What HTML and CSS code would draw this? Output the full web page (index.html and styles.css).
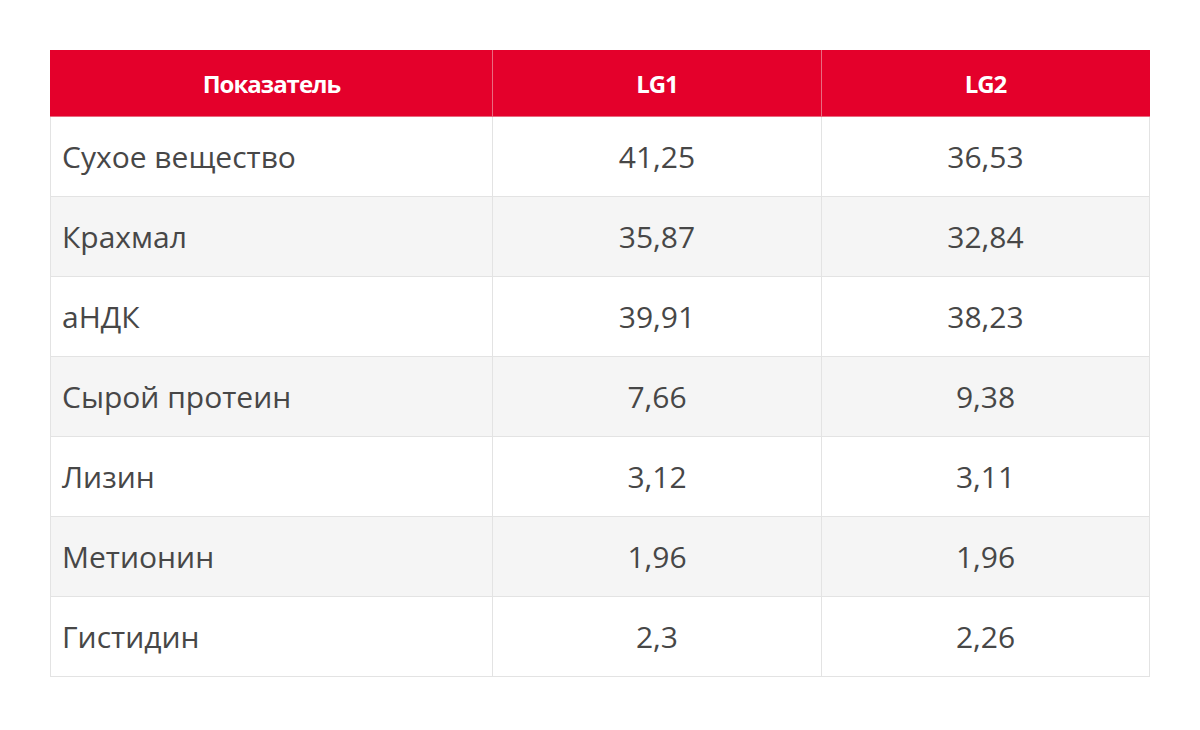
FILE: index.html
```html
<!DOCTYPE html>
<html lang="ru">
<head>
<meta charset="utf-8">
<link rel="stylesheet" href="styles.css">
</head>
<body>
<table class="data">
  <colgroup>
    <col class="c1"><col class="c2"><col class="c3">
  </colgroup>
  <thead>
    <tr><th>Показатель</th><th>LG1</th><th>LG2</th></tr>
  </thead>
  <tbody>
    <tr><td>Сухое вещество</td><td>41,25</td><td>36,53</td></tr>
    <tr><td>Крахмал</td><td>35,87</td><td>32,84</td></tr>
    <tr><td>аНДК</td><td>39,91</td><td>38,23</td></tr>
    <tr><td>Сырой протеин</td><td>7,66</td><td>9,38</td></tr>
    <tr><td>Лизин</td><td>3,12</td><td>3,11</td></tr>
    <tr><td>Метионин</td><td>1,96</td><td>1,96</td></tr>
    <tr><td>Гистидин</td><td>2,3</td><td>2,26</td></tr>
  </tbody>
</table>
</body>
</html>
```
FILE: styles.css
```css
html, body {
  margin: 0;
  padding: 0;
  background: #ffffff;
}
body {
  padding: 50px;
  font-family: "Open Sans", "Noto Sans", sans-serif;
}
.data {
  width: 1099px;
  border-collapse: collapse;
  table-layout: fixed;
}
.c1 { width: 442px; }
.c2 { width: 329px; }
.c3 { width: 328px; }
.data th {
  background: #e4002b;
  color: #ffffff;
  font-weight: 700;
  font-size: 24px;
  letter-spacing: -1px;
  height: 66px;
  padding: 0;
  text-align: center;
  border: 1px solid #e96a7f;
  border-top: none;
}
.data th:first-child { border-left: 1px solid #e4002b; }
.data th:last-child { border-right: 1px solid #e4002b; }
.data td {
  height: 79px;
  padding: 0;
  font-size: 30px;
  color: #474747;
  text-align: center;
  border: 1px solid #e3e3e3;
}
.data td:first-child {
  text-align: left;
  padding-left: 11px;
}
.data tbody tr:nth-child(even) td {
  background: #f5f5f5;
}
```
